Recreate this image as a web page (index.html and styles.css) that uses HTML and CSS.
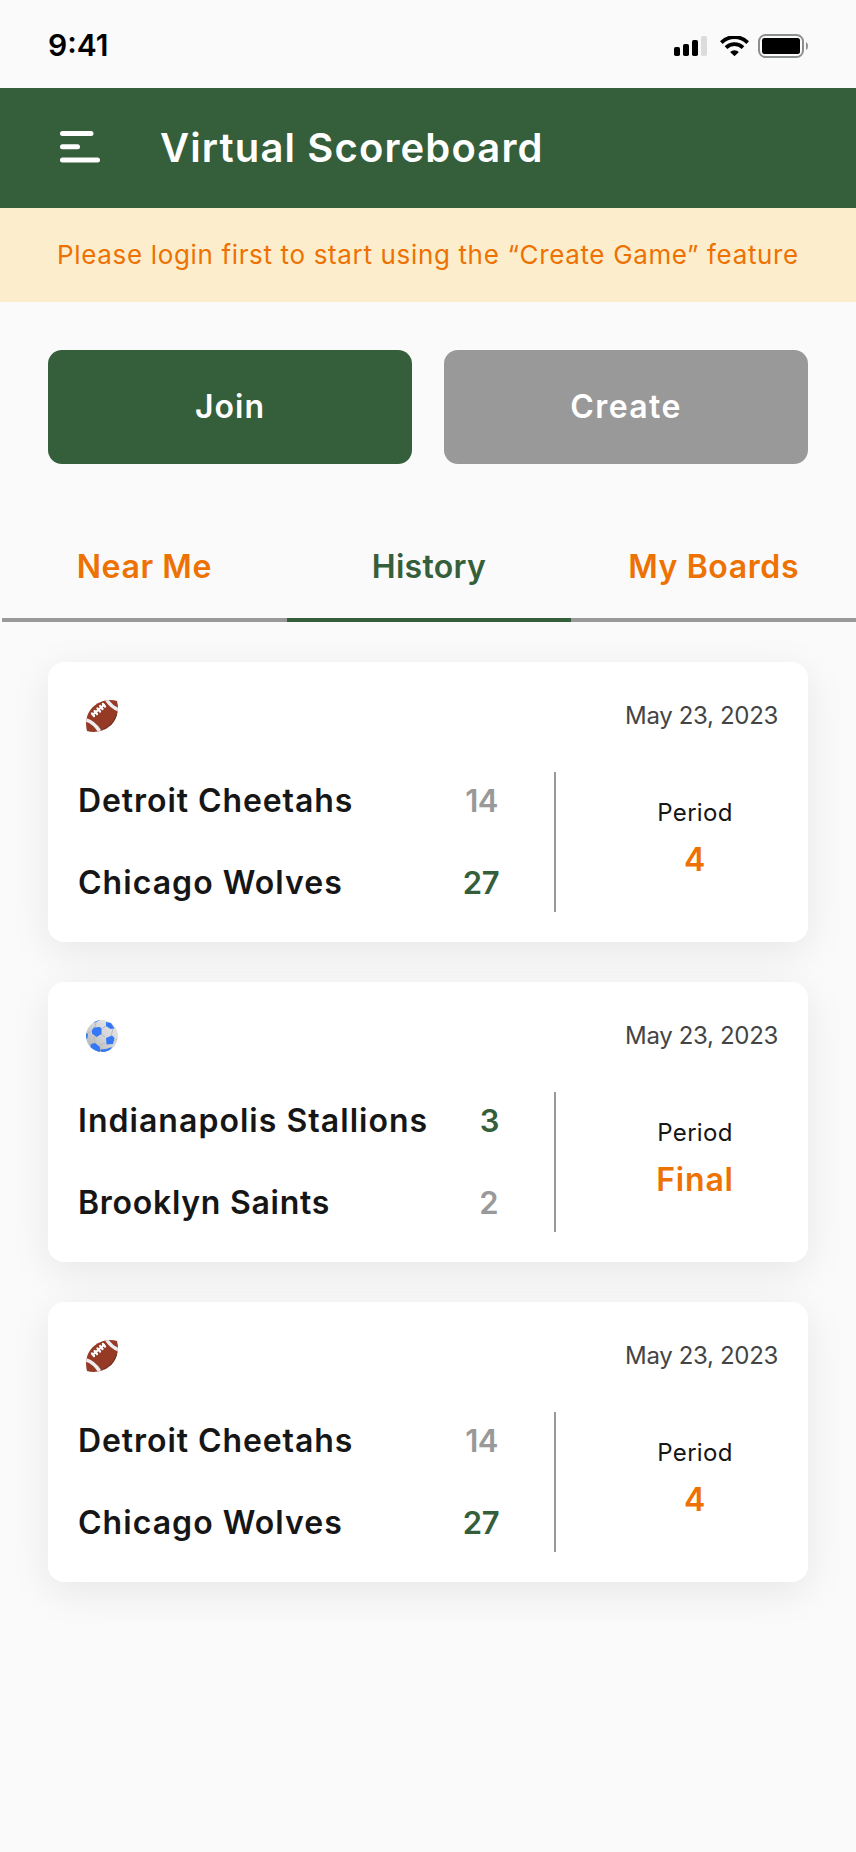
FILE: index.html
```html
<!DOCTYPE html>
<html lang="en">
<head>
<meta charset="utf-8">
<title>Virtual Scoreboard</title>
<link rel="stylesheet" href="styles.css">
</head>
<body>
<svg class="defs" width="0" height="0" aria-hidden="true">
  <defs>
    <linearGradient id="ball-shade" x1="1" y1="0" x2="0" y2="1"><stop offset="0" stop-color="#ececec"/><stop offset=".5" stop-color="#d2d3d5"/><stop offset="1" stop-color="#adaeb0"/></linearGradient>
    <clipPath id="ball-clip"><circle cx="16" cy="16" r="16"/></clipPath>
    <clipPath id="oval-clip"><path d="M1 31C-1.500 21 1 12 8 6C15 0 24-1 31 1C33.500 10 31 20 24 26C17 32 8 33 1 31Z"/></clipPath>
    <symbol id="football" viewBox="0 0 32 32">
      <g clip-path="url(#oval-clip)">
        <rect width="32" height="32" fill="#943a25"/>
        <path d="M-1 19.500Q8 22 13.500 31" fill="none" stroke="#ededf2" stroke-width="3.600"/>
        <path d="M20-1Q25 7 33 10" fill="none" stroke="#ededf2" stroke-width="3.400"/>
        <path d="M18 29Q27 25 31 14" fill="none" stroke="#4b2b2b" stroke-width="1.200" stroke-dasharray="1 1"/>
      </g>
      <path d="M7 14.500L18.500 4.500" stroke="#fff" stroke-width="2"/>
      <path d="M6 13.500L8 16M8.700 11L11 14M11.500 8.500L14 11.500M14.200 6L16.500 9M17 4L19 6.500" stroke="#fff" stroke-width="2.300" stroke-linecap="round"/>
    </symbol>
    <symbol id="soccer" viewBox="0 0 32 32">
      <g clip-path="url(#ball-clip)">
        <rect width="32" height="32" fill="url(#ball-shade)"/>
        <path d="M15 9L20 6M15 14L19 17M8 17L9 24M6 11L2 13M9 7L10 2M25 16L27 9M19 23L14 25M28 21L31 19" stroke="#b9babd" fill="none"/>
        <g fill="#3478f6">
          <path d="M8 7.500L14 7L15.500 9V14L10.500 17L6 13.500V10Z"/>
          <path d="M20 18L26 15.500L28.500 18L27 24L20.500 24.500Z"/>
          <path d="M20 2L25 3L28.500 8.500L24.500 9L20 6Z"/>
          <path d="M5 24L9 23L14 27L14 32H8L4 28Z"/>
          <path d="M-1 12L2 14L1.500 18L0 19Z"/>
          <path d="M7 3L9 0H14L10 2Z"/>
          <path d="M14 29.500L20 29L26 27L24 31L16 33Z"/>
        </g>
      </g>
    </symbol>
  </defs>
</svg>
<div class="screen">
  <div class="status">
    <span class="clock">9:41</span>
    <div class="status-icons">
      <svg width="34" height="20" viewBox="0 0 34 20"><rect y="11" width="6" height="9" rx="1.800"/><rect x="9" y="8" width="6" height="12" rx="1.800"/><rect x="18" y="4" width="6" height="16" rx="1.800"/><rect x="27" width="6" height="20" rx="1.800" fill="#dcdcdc"/></svg>
      <svg width="29" height="20" viewBox="0 0 29 20"><path d="M1.300 6.600A18.700 18.700 0 0 1 27.700 6.600" fill="none" stroke="#000" stroke-width="3.900"/><path d="M6 11.600A12 12 0 0 1 23 11.600" fill="none" stroke="#000" stroke-width="3.700"/><path d="M10.100 16A6.500 6.500 0 0 1 18.900 16L14.500 20.200Z"/></svg>
      <svg width="50" height="24" viewBox="0 0 50 24"><rect x="1" y="1" width="44" height="22" rx="6.500" fill="none" stroke="#8b908d" stroke-width="2"/><rect x="4" y="4" width="38" height="16" rx="2.500"/><path d="M48 8Q50 9 50 12T48 16Z" fill="#8b908d"/></svg>
    </div>
  </div>
  <header class="topbar">
    <svg width="40" height="32" viewBox="0 0 40 32" stroke="#fff" stroke-width="5" stroke-linecap="round"><path d="M2.500 2.500H31M2.500 15.700H17.500M2.500 29H37.500"/></svg>
    <h1 class="title">Virtual Scoreboard</h1>
  </header>
  <div class="notice"><span>Please login first to start using the “Create Game” feature</span></div>
  <div class="actions">
    <button class="btn join">Join</button>
    <button class="btn create">Create</button>
  </div>
  <nav class="tabs">
    <a class="tab near">Near Me</a>
    <a class="tab active">History</a>
    <a class="tab boards">My Boards</a>
  </nav>
  <main class="games">
    <article class="card">
      <div class="card-head"><svg width="32" height="32"><use href="#football"/></svg><time class="date">May 23, 2023</time></div>
      <div class="card-body">
        <div class="teams">
          <div class="team"><span class="detroit">Detroit Cheetahs</span><b class="score">14</b></div>
          <div class="team"><span class="chicago">Chicago Wolves</span><b class="score win">27</b></div>
        </div>
        <div class="period"><span class="label">Period</span><b class="value">4</b></div>
      </div>
    </article>
    <article class="card">
      <div class="card-head"><svg width="32" height="32"><use href="#soccer"/></svg><time class="date">May 23, 2023</time></div>
      <div class="card-body">
        <div class="teams">
          <div class="team"><span class="indy">Indianapolis Stallions</span><b class="score win">3</b></div>
          <div class="team"><span class="brooklyn">Brooklyn Saints</span><b class="score">2</b></div>
        </div>
        <div class="period"><span class="label">Period</span><b class="value">Final</b></div>
      </div>
    </article>
    <article class="card">
      <div class="card-head"><svg width="32" height="32"><use href="#football"/></svg><time class="date">May 23, 2023</time></div>
      <div class="card-body">
        <div class="teams">
          <div class="team"><span class="detroit">Detroit Cheetahs</span><b class="score">14</b></div>
          <div class="team"><span class="chicago">Chicago Wolves</span><b class="score win">27</b></div>
        </div>
        <div class="period"><span class="label">Period</span><b class="value">4</b></div>
      </div>
    </article>
  </main>
</div>
</body>
</html>
```
FILE: styles.css
```css
* { box-sizing: border-box; }
body { margin: 0; background: #fafafa; color: #161616; font-family: Inter, sans-serif; }
svg { display: block; flex: none; }
.defs { position: absolute; }
.screen { width: 856px; height: 1852px; overflow: hidden; }
.status { height: 88px; padding: 3px 48px 0; display: flex; align-items: center; justify-content: space-between; color: #000; }
.clock { margin-bottom: 1px; font-size: 30px; font-weight: 600; line-height: 40px; }
.status-icons { display: flex; align-items: center; }
.status-icons svg:nth-child(2) { margin: 0 9px 0 12px; }
.topbar { height: 120px; padding: 0 60px; display: flex; align-items: center; gap: 60px; background: #355e3b; color: #fff; }
.topbar svg { margin-top: -3px; }
.title { margin: 0; font-size: 40px; font-weight: 600; line-height: 48px; letter-spacing: 1.130px; white-space: nowrap; }
.notice { height: 94px; padding-bottom: 2px; display: flex; align-items: center; justify-content: center; background: #fceecc; color: #ed7203; font-size: 26px; letter-spacing: .650px; white-space: nowrap; }
.actions { padding: 48px 48px 0; display: grid; grid-template-columns: 1fr 1fr; gap: 32px; }
.btn { height: 114px; border: 0; border-radius: 14px; padding: 0; font: 600 32px/40px Inter, sans-serif; color: #fff; background: #999; }
.join { background: #355e3b; letter-spacing: 1px; }
.create { letter-spacing: 1.400px; }
.tabs { margin: 70px 0 0 2px; display: grid; grid-template-columns: repeat(3, 1fr); }
.tab { height: 88px; padding-top: 13px; border-bottom: 4px solid #999; text-align: center; font-size: 32px; font-weight: 600; line-height: 40px; letter-spacing: .600px; color: #ed7203; }
.active { color: #355e3b; border-color: #355e3b; letter-spacing: .300px; }
.games { padding: 40px 48px; display: flex; flex-direction: column; gap: 40px; }
.card { height: 280px; padding: 30px; border-radius: 16px; background: #fff; box-shadow: 0 10px 40px rgba(0, 0, 0, .08); }
.card-head { height: 48px; padding-left: 8px; display: flex; align-items: center; justify-content: space-between; }
.date { font-size: 24px; line-height: 32px; letter-spacing: -.330px; color: #444; }
.card-body { height: 140px; margin-top: 32px; display: flex; }
.teams { width: 478px; padding: 9px 54px 0 0; border-right: 2px solid #999; display: flex; flex-direction: column; gap: 42px; }
.team { display: flex; justify-content: space-between; font-size: 32px; font-weight: 600; line-height: 40px; white-space: nowrap; }
.detroit { letter-spacing: .920px; }
.indy, .chicago { letter-spacing: 1.040px; }
.brooklyn { letter-spacing: .730px; }
.score { padding-right: 2px; font-size: 31px; font-weight: 600; letter-spacing: -.500px; color: #999; }
.win { padding-right: 1px; color: #355e3b; }
.period { flex: 1; padding: 25px 0 0 56px; display: flex; flex-direction: column; align-items: center; gap: 10px; }
.label { font-size: 24px; line-height: 32px; letter-spacing: .300px; }
.value { font-size: 32px; font-weight: 600; line-height: 42px; letter-spacing: .800px; color: #ed7203; }
```
